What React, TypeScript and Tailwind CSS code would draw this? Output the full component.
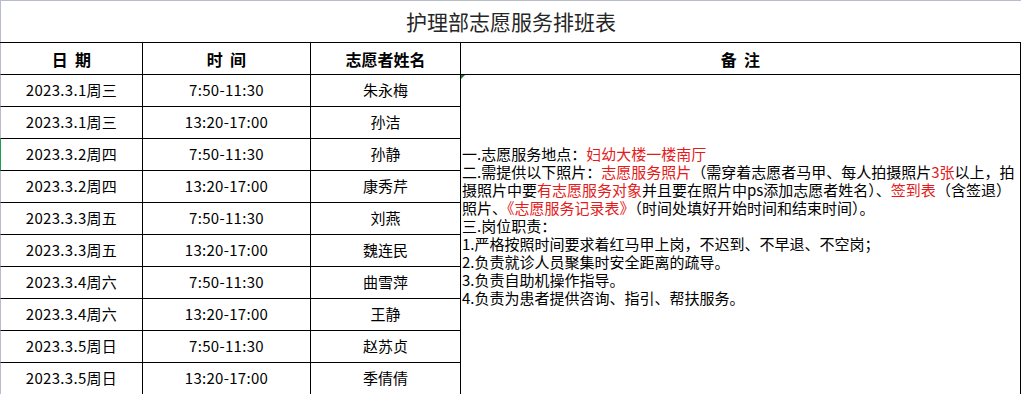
import React from "react";

interface Shift {
  date: string;
  time: string;
  name: string;
}

const shifts: Shift[] = [
  { date: "2023.3.1周三", time: "7:50-11:30", name: "朱永梅" },
  { date: "2023.3.1周三", time: "13:20-17:00", name: "孙洁" },
  { date: "2023.3.2周四", time: "7:50-11:30", name: "孙静" },
  { date: "2023.3.2周四", time: "13:20-17:00", name: "康秀芹" },
  { date: "2023.3.3周五", time: "7:50-11:30", name: "刘燕" },
  { date: "2023.3.3周五", time: "13:20-17:00", name: "魏连民" },
  { date: "2023.3.4周六", time: "7:50-11:30", name: "曲雪萍" },
  { date: "2023.3.4周六", time: "13:20-17:00", name: "王静" },
  { date: "2023.3.5周日", time: "7:50-11:30", name: "赵苏贞" },
  { date: "2023.3.5周日", time: "13:20-17:00", name: "季倩倩" },
];

const Red = ({ children }: { children: React.ReactNode }) => (
  <span className="text-[#e31b1b]">{children}</span>
);

const App = () => {
  return (
    <div className="w-[1023px] h-[394px] overflow-hidden bg-white text-black font-['Noto_Sans_CJK_SC',sans-serif]">
      <div className="w-[1021px]">
        {/* title */}
        <div className="h-[42px] border-t border-l border-[#b9bccb] flex items-center justify-center">
          <h1 className="text-[21px] text-[#262626] leading-none">护理部志愿服务排班表</h1>
        </div>

        {/* schedule */}
        <div className="grid grid-cols-[143px_168px_150px_560px] border-t border-black">
          <div className="h-8 border-l border-l-[#b9bccb] border-r border-b border-black flex items-center justify-center text-[16px] font-bold">
            日&nbsp;&nbsp;期
          </div>
          <div className="h-8 border-r border-b border-black flex items-center justify-center text-[16px] font-bold">
            时&nbsp;&nbsp;间
          </div>
          <div className="h-8 border-r border-b border-black flex items-center justify-center text-[16px] font-bold">
            志愿者姓名
          </div>
          <div className="h-8 border-r border-b border-black flex items-center justify-center text-[16px] font-bold">
            备&nbsp;&nbsp;注
          </div>

          {shifts.map((s, i) => (
            <React.Fragment key={i}>
              <div
                className={`h-8 border-l border-r border-b border-black flex items-center justify-center text-[15px] tracking-[0.3px] ${
                  i === 2 ? "border-l-[#1f9d55]" : "border-l-[#b9bccb]"
                }`}
              >
                {s.date}
              </div>
              <div className="h-8 border-r border-b border-black flex items-center justify-center text-[15px] tracking-[0.3px]">
                {s.time}
              </div>
              <div className="h-8 border-r border-b border-black flex items-center justify-center text-[15px]">
                {s.name}
              </div>
              {i === 0 && (
                <div className="row-span-10 relative border-r border-b border-black pt-[70px] pl-[1px] text-[15px] leading-[18px] whitespace-nowrap">
                  <svg className="absolute left-0 top-0" width="4" height="4" viewBox="0 0 4 4">
                    <polygon points="0,0 4,0 0,4" fill="#1e7a3c" />
                  </svg>
                  <div>
                    一.志愿服务地点：<Red>妇幼大楼一楼南厅</Red>
                  </div>
                  <div>
                    二.需提供以下照片：<Red>志愿服务照片</Red>（需穿着志愿者马甲、每人拍摄照片<Red>3张</Red>以上，拍
                  </div>
                  <div>
                    摄照片中要<Red>有志愿服务对象</Red>并且要在照片中ps添加志愿者姓名）、<Red>签到表</Red>（含签退）
                  </div>
                  <div>
                    照片、<Red>《志愿服务记录表》</Red>（时间处填好开始时间和结束时间）。
                  </div>
                  <div>三.岗位职责：</div>
                  <div>1.严格按照时间要求着红马甲上岗，不迟到、不早退、不空岗；</div>
                  <div>2.负责就诊人员聚集时安全距离的疏导。</div>
                  <div>3.负责自助机操作指导。</div>
                  <div>4.负责为患者提供咨询、指引、帮扶服务。</div>
                </div>
              )}
            </React.Fragment>
          ))}
        </div>
      </div>
    </div>
  );
};

export default App;
